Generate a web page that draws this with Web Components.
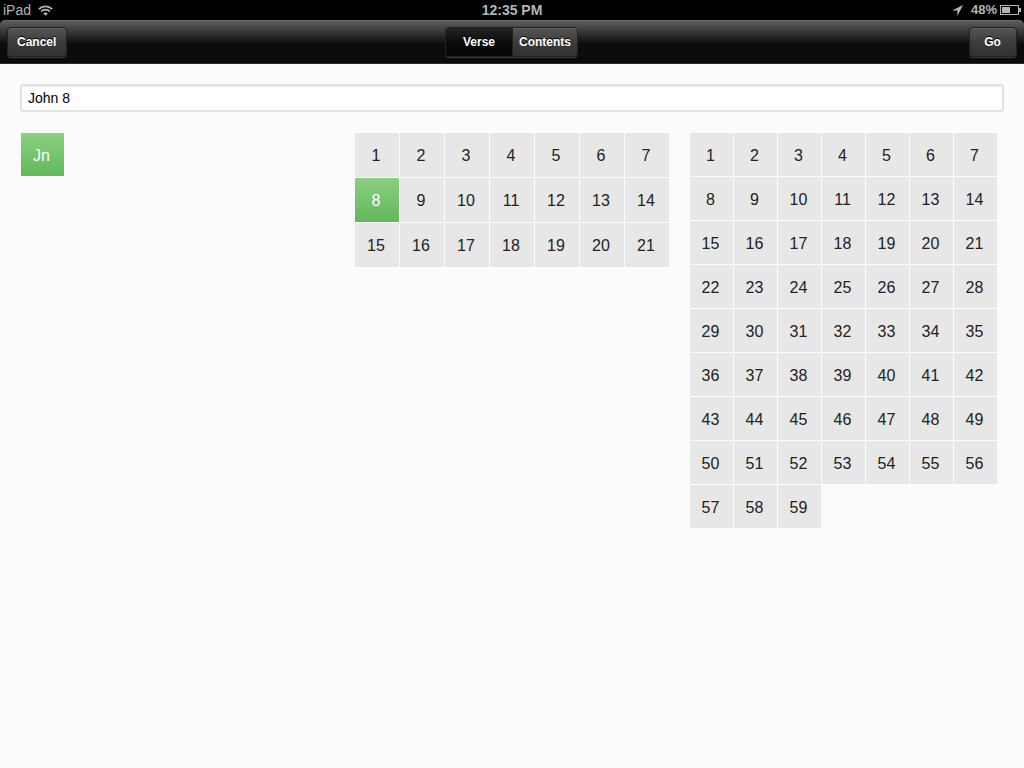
<!DOCTYPE html>
<html>
<head>
<meta charset="utf-8">
<title>Verse</title>
<style>
    html, body { margin: 0; padding: 0; height: 100%; background: #fbfbfb; }
    body { font-family: "Liberation Sans", Arial, sans-serif; overflow: hidden; }
</style>
</head>
<body>
<status-bar></status-bar>
<nav-bar>
    <nav-button slot="left">Cancel</nav-button>
    <seg-control slot="center"></seg-control>
    <nav-button slot="right">Go</nav-button>
</nav-bar>
<picker-page>
    <ref-input value="John 8"></ref-input>
    <tile-grid labels="Jn" selected="Jn" cell="43" gap="0" inset="1"></tile-grid>
    <tile-grid count="21" selected="8" cell="44" gap="1"></tile-grid>
    <tile-grid count="59" cell="43" gap="1"></tile-grid>
</picker-page>
<script>
class statusBar extends HTMLElement {
    constructor(){
        super();
        this.attachShadow({mode: "open"});
        this.shadowRoot.innerHTML = `
        <style>
            :host { display: flex; align-items: center; justify-content: space-between; position: relative;
                height: 20px; background: #000; color: #b4b4b4; font-size: 14px; line-height: 20px; }
            .side { display: flex; align-items: center; }
            .left { padding-left: 3px; gap: 7px; }
            .right { padding-right: 3px; font-weight: bold; font-size: 13px; }
            .right span { margin: 0 3px 0 8px; }
            .time { position: absolute; left: 0; right: 0; text-align: center; font-weight: bold; font-size: 14px; }
            svg { display: block; }
        </style>
        <div class="side left">
            <span>iPad</span>
            <svg width="15" height="11" viewBox="0 0 15 11">
                <path d="M.8 4.2C4.6.4 10.4.4 14.2 4.2" fill="none" stroke="#b4b4b4" stroke-width="1.7"/>
                <path d="M3 6.5C5.5 4 9.5 4 12 6.5" fill="none" stroke="#b4b4b4" stroke-width="1.7"/>
                <path d="M7.5 10.8 5.2 8.5C6.5 7.2 8.5 7.2 9.8 8.5Z" fill="#b4b4b4"/>
            </svg>
        </div>
        <div class="time">12:35 PM</div>
        <div class="side right">
            <svg width="11" height="11" viewBox="0 0 11 11"><path d="M11 0 0 5.4h5.4V11Z" fill="#b4b4b4"/></svg>
            <span>48%</span>
            <svg width="21" height="10" viewBox="0 0 21 10">
                <rect x=".5" y=".5" width="18" height="9" fill="none" stroke="#b4b4b4"/>
                <rect x="2" y="2" width="8" height="6" fill="#b4b4b4"/>
                <rect x="19" y="3" width="2" height="4" fill="#b4b4b4"/>
            </svg>
        </div>
        `;
    }
}

class navBar extends HTMLElement {
    constructor(){
        super();
        this.attachShadow({mode: "open"});
        this.shadowRoot.innerHTML = `
        <style>
            :host { display: block; background: #000; }
            .bar { display: grid; grid-template-columns: 1fr auto 1fr; align-items: center; height: 44px;
                box-sizing: border-box; padding: 0 7px; border-radius: 5px 5px 0 0;
                border-top: 1px solid #6a6a6a; border-bottom: 1px solid #2a2a2a;
                background: linear-gradient(#5c5c5c 0, #0b0b0b 56%, #0b0b0b 100%); }
            .l { justify-self: start; } .r { justify-self: end; }
        </style>
        <div class="bar">
            <div class="l"><slot name="left"></slot></div>
            <div><slot name="center"></slot></div>
            <div class="r"><slot name="right"></slot></div>
        </div>
        `;
    }
}

class navButton extends HTMLElement {
    constructor(){
        super();
        this.attachShadow({mode: "open"});
        this.shadowRoot.innerHTML = `
        <style>
            :host { display: flex; align-items: center; justify-content: center; box-sizing: border-box;
                height: 30px; padding: 0 10px 0 9px; min-width: 48px; border-radius: 4px;
                border: 1px solid #222; box-shadow: 0 1px 0 #3a3a3a, inset 0 1px 0 #5e5e5e;
                background: linear-gradient(#565656, #3a3a3a 55%, #323232);
                color: #fff; font-size: 12px; font-weight: bold; text-shadow: 0 -1px 0 #000; }
        </style>
        <slot></slot>
        `;
    }
}

class segControl extends HTMLElement {
    constructor(){
        super();
        this.attachShadow({mode: "open"});
        this.shadowRoot.innerHTML = `
        <style>
            :host { display: flex; box-sizing: border-box; height: 30px; width: 133px; margin-right: 1px;
                border-radius: 4px; overflow: hidden; border: 1px solid #222; box-shadow: 0 1px 0 #3a3a3a;
                color: #fff; font-size: 12px; font-weight: bold; text-shadow: 0 -1px 0 #000; }
            div { display: flex; align-items: center; justify-content: center; }
            .on { width: 66px; background: linear-gradient(#242424, #0a0a0a 55%, #060606); }
            .off { flex: 1; border-left: 1px solid #222; box-shadow: inset 0 1px 0 #5e5e5e;
                background: linear-gradient(#565656, #3a3a3a 55%, #323232); }
        </style>
        <div class="on">Verse</div>
        <div class="off">Contents</div>
        `;
    }
}

class pickerPage extends HTMLElement {
    constructor(){
        super();
        this.attachShadow({mode: "open"});
        this.shadowRoot.innerHTML = `
        <style>
            :host { display: grid; grid-template-columns: 335px 335px 1fr; row-gap: 21px; align-content: start;
                padding: 20px 20px 0 20px; background: #fbfbfb; }
            ::slotted(ref-input) { grid-column: 1 / -1; }
        </style>
        <slot></slot>
        `;
    }
}

class refInput extends HTMLElement {
    constructor(){
        super();
        this.attachShadow({mode: "open"});
    }
    connectedCallback(){
        this.shadowRoot.innerHTML = `
        <style>
            :host { display: flex; align-items: center; box-sizing: border-box; height: 28px; padding-left: 6px;
                background: #fff; border: 2px solid #e2e2e2; border-radius: 3px;
                box-shadow: inset 0 1px 1px #eee; color: #000; font-size: 14px; }
        </style>
        <span>${this.getAttribute("value")}</span>
        `;
    }
}

class tileGrid extends HTMLElement {
    constructor(){
        super();
        this.attachShadow({mode: "open"});
    }
    connectedCallback(){
        const cell = this.getAttribute("cell");
        const gap = this.getAttribute("gap");
        const inset = this.getAttribute("inset") || 0;
        const selected = this.getAttribute("selected");
        let labels = [];
        if (this.hasAttribute("labels")) {
            labels = this.getAttribute("labels").split(",");
        } else {
            for (let i = 1; i <= Number(this.getAttribute("count")); i++) labels.push(String(i));
        }
        const tiles = labels.map(t => `<div class="${t === selected ? "tile on" : "tile"}">${t}</div>`).join("");
        this.shadowRoot.innerHTML = `
        <style>
            :host { display: block; padding-left: ${inset}px; }
            .grid { display: grid; grid-template-columns: repeat(7, ${cell}px); grid-auto-rows: ${cell}px; gap: ${gap}px; }
            .tile { display: flex; align-items: center; justify-content: center; box-sizing: border-box;
                padding: 2px 2px 0 0; background: #e7e7e7; color: #222; font-size: 16px; }
            .on { background: linear-gradient(#8acf80, #62b95a); color: #fff; }
        </style>
        <div class="grid">${tiles}</div>
        `;
    }
}

customElements.define('status-bar', statusBar);
customElements.define('nav-bar', navBar);
customElements.define('nav-button', navButton);
customElements.define('seg-control', segControl);
customElements.define('picker-page', pickerPage);
customElements.define('ref-input', refInput);
customElements.define('tile-grid', tileGrid);
</script>
</body>
</html>
